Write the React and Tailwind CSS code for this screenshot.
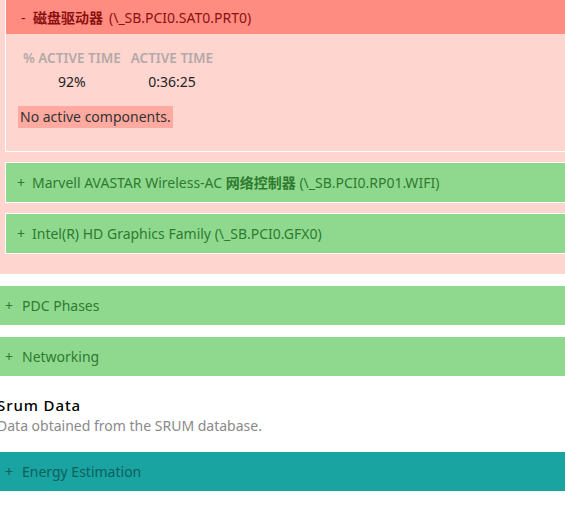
const font = { fontFamily: '"Noto Sans", "Noto Sans CJK SC", sans-serif' };

function DeviceRow({ title, cjk, id }) {
  return (
    <div className="ml-[5px] border border-r-0 border-white bg-[#8fd98f] h-[41px] flex items-center pl-[11px] text-[14px] text-[#2f7a2f]">
      <span className="w-[15px]">+</span>
      <span>
        {title}
        {cjk && <span className="font-bold"> {cjk}</span>} {id}
      </span>
    </div>
  );
}

function Bar({ label, tone }) {
  const cls =
    tone === 'teal'
      ? 'bg-[#19a3a1] text-[#0f5f5d]'
      : 'bg-[#8fd98f] text-[#2f7a2f]';
  return (
    <div className={`${cls} h-[39px] flex items-center pl-[5px] text-[14px]`}>
      <span className="w-[17px]">+</span>
      <span>{label}</span>
    </div>
  );
}

export default function App() {
  return (
    <div className="w-[565px] h-[517px] overflow-hidden bg-white" style={font}>
      <div className="bg-[#ffd5d0] pb-[20px]">
        <div className="ml-[5px] border-l border-b border-white">
          <div className="bg-[#ff8c80] h-[34px] flex items-center pl-[15px] text-[14px] text-[#8b1010]">
            <span className="w-[12px]">-</span>
            <span className="font-bold">磁盘驱动器</span>
            <span className="ml-[6px]">(\_SB.PCI0.SAT0.PRT0)</span>
          </div>
          <div className="pt-[14px] pb-[23px] pl-[12px]">
            <table className="text-center">
              <thead>
                <tr className="text-[13.5px] text-[#b3a9a7]">
                  <th className="px-[5px] font-semibold">% ACTIVE TIME</th>
                  <th className="px-[5px] font-semibold">ACTIVE TIME</th>
                </tr>
              </thead>
              <tbody>
                <tr className="text-[14px] text-[#222]">
                  <td className="pt-[3px]">92%</td>
                  <td className="pt-[3px]">0:36:25</td>
                </tr>
              </tbody>
            </table>
            <div className="mt-[14px] inline-block bg-[#ffaaa0] px-[2px] h-[22px] leading-[22px] text-[14px] text-[#333]">
              No active components.
            </div>
          </div>
        </div>
        <div className="mt-[10px] flex flex-col gap-[10px]">
          <DeviceRow title="Marvell AVASTAR Wireless-AC" cjk="网络控制器" id="(\_SB.PCI0.RP01.WIFI)" />
          <DeviceRow title="Intel(R) HD Graphics Family" id="(\_SB.PCI0.GFX0)" />
        </div>
      </div>
      <div className="mt-[12px] flex flex-col gap-[12px]">
        <Bar label="PDC Phases" />
        <Bar label="Networking" />
      </div>
      <div className="mt-[18px] ml-[-3px]">
        <div className="text-[15px] font-medium tracking-[0.06em] text-black leading-[22px]">Srum Data</div>
        <div className="text-[14px] text-[#8a8a8a] leading-[20px]">Data obtained from the SRUM database.</div>
      </div>
      <div className="mt-[16px]">
        <Bar label="Energy Estimation" tone="teal" />
      </div>
    </div>
  );
}
